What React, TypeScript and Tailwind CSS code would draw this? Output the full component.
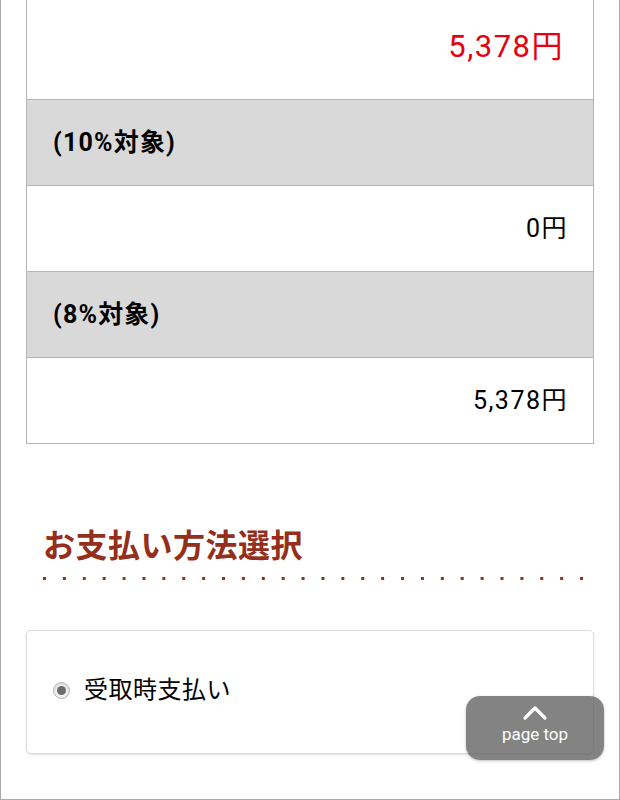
import React from "react";

const font = { fontFamily: '"Roboto", "Noto Sans CJK JP", sans-serif' };

export default function App() {
  return (
    <div
      className="relative w-[620px] h-[800px] overflow-hidden bg-white border-x border-b border-[#aaaaaa] text-black"
      style={font}
    >
      <div className="mx-[25px] border-x border-b border-[#b4b4b4]">
        <div className="h-[99px] flex items-center justify-end pr-[29px] pb-[4px] text-[31px] tracking-[1.5px] text-[#e60012]">
          5,378円
        </div>
        <div className="h-[86px] flex items-center pl-[26px] bg-[#d9d9d9] border-t border-[#b4b4b4] text-[25px] tracking-[1.2px] font-bold">
          (10%対象)
        </div>
        <div className="h-[86px] flex items-center justify-end pr-[25px] border-t border-[#b4b4b4] text-[25px] tracking-[1.5px]">
          0円
        </div>
        <div className="h-[86px] flex items-center pl-[26px] bg-[#d9d9d9] border-t border-[#b4b4b4] text-[25px] tracking-[1.2px] font-bold">
          (8%対象)
        </div>
        <div className="h-[86px] flex items-center justify-end pr-[25px] border-t border-[#b4b4b4] text-[25px] tracking-[1.5px]">
          5,378円
        </div>
      </div>

      <div className="mx-[42px] mt-[86px]">
        <h2 className="text-[32px] font-bold text-[#952f1c] leading-none tracking-[0.5px]">
          お支払い方法選択
        </h2>
        <div className="mt-[15px] h-[3px] w-[541px] bg-[linear-gradient(to_right,#952f1c_3px,transparent_3px)] bg-[length:19.9px_3px] bg-repeat-x" />
      </div>

      <div className="mx-[25px] mt-[50px] h-[124px] rounded-[5px] border border-[#dddddd] shadow-[0_1px_2px_rgba(0,0,0,0.12)] flex items-center pl-[26px] pb-[4px]">
        <span className="w-[17px] h-[17px] rounded-full border border-[#b5b5b5] bg-[#f0f0f0] shadow-[inset_0_1px_2px_rgba(0,0,0,0.15)] flex items-center justify-center">
          <span className="w-[9px] h-[9px] rounded-full bg-[#6b6b6b]" />
        </span>
        <span className="ml-[14px] text-[24px] tracking-[0.5px]">受取時支払い</span>
      </div>

      <div className="absolute left-[465px] top-[696px] w-[138px] h-[64px] rounded-[14px] bg-[rgba(100,100,100,0.8)] shadow-[0_1px_3px_rgba(0,0,0,0.25)] flex flex-col items-center justify-center pb-[8px] text-white">
        <svg width="26" height="16" viewBox="0 0 26 16" fill="none">
          <path d="M3 13 L13 3 L23 13" stroke="white" strokeWidth="3.2" strokeLinecap="round" strokeLinejoin="round" />
        </svg>
        <span className="text-[17px] leading-none mt-[5px]">page top</span>
      </div>
    </div>
  );
}
